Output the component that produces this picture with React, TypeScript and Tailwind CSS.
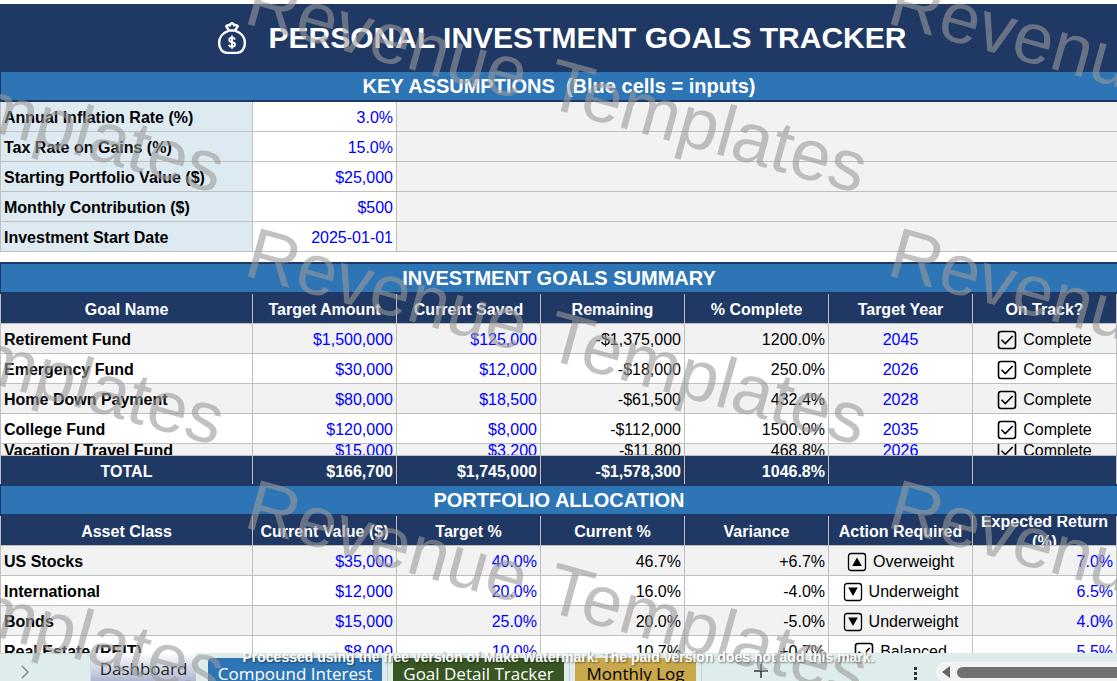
import type { ReactNode } from "react";

type Tone = "input" | "plain";

interface Goal {
  name: string;
  target: string;
  saved: string;
  remaining: string;
  complete: string;
  year: string;
}

interface Asset {
  name: string;
  value: string;
  target: string;
  current: string;
  variance: string;
  action: "Overweight" | "Underweight" | "Balanced";
  expected: string;
}

const assumptions = [
  { id: "inflation", label: "Annual Inflation Rate (%)", value: "3.0%" },
  { id: "tax", label: "Tax Rate on Gains (%)", value: "15.0%" },
  { id: "portfolio", label: "Starting Portfolio Value ($)", value: "$25,000" },
  { id: "contribution", label: "Monthly Contribution ($)", value: "$500" },
  { id: "start", label: "Investment Start Date", value: "2025-01-01" },
];

const goalHeaders = [
  "Goal Name",
  "Target Amount",
  "Current Saved",
  "Remaining",
  "% Complete",
  "Target Year",
  "On Track?",
];

const goals: Goal[] = [
  { name: "Retirement Fund", target: "$1,500,000", saved: "$125,000", remaining: "-$1,375,000", complete: "1200.0%", year: "2045" },
  { name: "Emergency Fund", target: "$30,000", saved: "$12,000", remaining: "-$18,000", complete: "250.0%", year: "2026" },
  { name: "Home Down Payment", target: "$80,000", saved: "$18,500", remaining: "-$61,500", complete: "432.4%", year: "2028" },
  { name: "College Fund", target: "$120,000", saved: "$8,000", remaining: "-$112,000", complete: "1500.0%", year: "2035" },
  { name: "Vacation / Travel Fund", target: "$15,000", saved: "$3,200", remaining: "-$11,800", complete: "468.8%", year: "2026" },
];

const totals = ["$166,700", "$1,745,000", "-$1,578,300", "1046.8%", "", ""];

const assetHeaders = [
  "Asset Class",
  "Current Value ($)",
  "Target %",
  "Current %",
  "Variance",
  "Action Required",
  "Expected Return (%)",
];

const assets: Asset[] = [
  { name: "US Stocks", value: "$35,000", target: "40.0%", current: "46.7%", variance: "+6.7%", action: "Overweight", expected: "7.0%" },
  { name: "International", value: "$12,000", target: "20.0%", current: "16.0%", variance: "-4.0%", action: "Underweight", expected: "6.5%" },
  { name: "Bonds", value: "$15,000", target: "25.0%", current: "20.0%", variance: "-5.0%", action: "Underweight", expected: "4.0%" },
  { name: "Real Estate (REIT)", value: "$8,000", target: "10.0%", current: "10.7%", variance: "+0.7%", action: "Balanced", expected: "5.5%" },
];

function MoneyBagIcon() {
  return (
    <svg width="30" height="34" viewBox="0 0 30 34" fill="none" stroke="white" strokeWidth="2.4" strokeLinejoin="round" aria-hidden="true">
      <path d="M12 9.500 9.200 5.200c1.300-1.300 2.500-1.400 3.700-.8.400-1.500 1.200-2.200 2.100-2.200s1.700.7 2.100 2.200c1.200-.6 2.400-.5 3.700.8L18 9.500" />
      <path d="M11.500 9.500h7" strokeLinecap="round" />
      <path d="M11.500 9.800C5.800 11.600 2.100 16.200 2.100 21.800c0 6 3.200 10.100 8.100 10.100h9.600c4.900 0 8.100-4.100 8.100-10.100 0-5.600-3.700-10.200-9.400-12" />
      <path d="M17.900 18.600c-.4-1.200-1.400-1.800-2.900-1.800-1.700 0-2.800.9-2.800 2.200 0 3.100 5.800 1.500 5.800 4.500 0 1.400-1.200 2.300-3 2.300-1.600 0-2.700-.7-3.100-1.900M15 14.600v13.200" strokeWidth="1.900" />
    </svg>
  );
}

function CheckIcon() {
  return (
    <svg width="20" height="20" viewBox="0 0 20 20" fill="none" stroke="black" aria-hidden="true">
      <rect x="1.500" y="1.500" width="17" height="17" rx="2.500" strokeWidth="1.600" />
      <path d="m4.500 9.700 3.800 3.800L15.700 6" strokeWidth="1.600" />
    </svg>
  );
}

function ArrowIcon({ up }: { up: boolean }) {
  return (
    <svg width="20" height="20" viewBox="0 0 20 20" fill="none" stroke="black" aria-hidden="true">
      <rect x="1.500" y="1.500" width="17" height="17" rx="2.500" strokeWidth="1.300" />
      <path d={up ? "M10 5.500 14.800 14H5.200z" : "M10 14 14.800 5.500H5.200z"} fill="black" stroke="none" />
    </svg>
  );
}

function Columns() {
  return (
    <colgroup>
      <col className="w-[252px]" />
      <col span={6} />
    </colgroup>
  );
}

function HeaderRow({ labels }: { labels: string[] }) {
  return (
    <tr className="bg-[#1f3864] text-white">
      {labels.map((label) => (
        <th key={label} scope="col" className="border-r border-b border-[#bfbfbf] p-0 font-bold">
          <div className="flex h-[29px] items-center justify-center overflow-hidden pt-0.5">{label}</div>
        </th>
      ))}
    </tr>
  );
}

function SectionTitle({ children }: { children: ReactNode }) {
  return (
    <h2 className="flex h-8 items-center justify-center border-y-2 border-l border-[#1f3864] bg-[#2e75b6] text-xl font-bold whitespace-pre text-white">
      {children}
    </h2>
  );
}

interface CellProps {
  children: ReactNode;
  tone?: Tone;
  center?: boolean;
  short?: boolean;
}

function Cell({ children, tone = "plain", center, short }: CellProps) {
  return (
    <td className={`border-r border-b border-[#bfbfbf] p-0 ${tone === "input" ? "text-[#0000ff]" : "text-black"}`}>
      <div
        className={`flex items-center gap-1.5 overflow-hidden px-[3px] pt-0.5 ${short ? "h-[11px]" : "h-[29px]"} ${
          center ? "justify-center" : "justify-end"
        }`}
      >
        {children}
      </div>
    </td>
  );
}

function NameCell({ children, short }: { children: ReactNode; short?: boolean }) {
  return (
    <th scope="row" className="border-r border-b border-[#bfbfbf] p-0 text-left font-bold text-black">
      <div className={`flex items-center overflow-hidden px-[3px] pt-0.5 ${short ? "h-[11px]" : "h-[29px]"}`}>{children}</div>
    </th>
  );
}

function Assumptions() {
  return (
    <table className="w-full table-fixed border-separate border-spacing-0 border-l border-[#bfbfbf]">
      <colgroup>
        <col className="w-[252px]" />
        <col className="w-[144px]" />
        <col />
      </colgroup>
      <tbody>
        {assumptions.map((item) => (
          <tr key={item.id}>
            <th scope="row" className="border-r border-b border-[#bfbfbf] bg-[#deeaf1] p-0 text-left font-bold">
              <label htmlFor={item.id} className="flex h-[29px] items-center px-[3px] pt-0.5">
                {item.label}
              </label>
            </th>
            <td className="border-r border-b border-[#bfbfbf] p-0">
              <input
                id={item.id}
                defaultValue={item.value}
                className="block h-[29px] w-full bg-white px-[3px] pt-0.5 text-right text-[#0000ff] outline-none"
              />
            </td>
            <td className="border-b border-[#bfbfbf] bg-[#f2f2f2] p-0" />
          </tr>
        ))}
      </tbody>
    </table>
  );
}

function GoalsTable() {
  return (
    <table className="w-full table-fixed border-separate border-spacing-0 border-l border-[#bfbfbf]">
      <Columns />
      <thead>
        <HeaderRow labels={goalHeaders} />
      </thead>
      <tbody>
        {goals.map((goal, index) => {
          const short = index === goals.length - 1;
          return (
            <tr key={goal.name} className={index % 2 === 0 ? "bg-[#f2f2f2]" : "bg-white"}>
              <NameCell short={short}>{goal.name}</NameCell>
              <Cell tone="input" short={short}>{goal.target}</Cell>
              <Cell tone="input" short={short}>{goal.saved}</Cell>
              <Cell short={short}>{goal.remaining}</Cell>
              <Cell short={short}>{goal.complete}</Cell>
              <Cell tone="input" short={short} center>{goal.year}</Cell>
              <Cell short={short} center>
                <CheckIcon />
                Complete
              </Cell>
            </tr>
          );
        })}
      </tbody>
      <tfoot>
        <tr className="bg-[#1f3864] text-white">
          <th scope="row" className="border-r border-[#bfbfbf] p-0 font-bold">
            <div className="flex h-7 items-center justify-center pt-1">TOTAL</div>
          </th>
          {totals.map((total, index) => (
            <td key={index} className="border-r border-[#bfbfbf] p-0 font-bold">
              <div className="flex h-7 items-center justify-end px-[3px] pt-1">{total}</div>
            </td>
          ))}
        </tr>
      </tfoot>
    </table>
  );
}

function AllocationTable() {
  return (
    <table className="w-full table-fixed border-separate border-spacing-0 border-l border-[#bfbfbf]">
      <Columns />
      <thead>
        <HeaderRow labels={assetHeaders} />
      </thead>
      <tbody>
        {assets.map((asset, index) => (
          <tr key={asset.name} className={index % 2 === 0 ? "bg-[#f2f2f2]" : "bg-white"}>
            <NameCell>{asset.name}</NameCell>
            <Cell tone="input">{asset.value}</Cell>
            <Cell tone="input">{asset.target}</Cell>
            <Cell>{asset.current}</Cell>
            <Cell>{asset.variance}</Cell>
            <Cell center>
              {asset.action === "Balanced" ? <CheckIcon /> : <ArrowIcon up={asset.action === "Overweight"} />}
              {asset.action}
            </Cell>
            <Cell tone="input">{asset.expected}</Cell>
          </tr>
        ))}
      </tbody>
    </table>
  );
}

function SheetTabs() {
  return (
    <footer className="flex h-7 shrink-0 items-start overflow-hidden bg-[#deecec] font-['Open_Sans','Noto_Sans',sans-serif] text-[17px] leading-6">
      <button aria-label="Next sheets" className="flex h-9 w-[91px] items-center rounded-tr-md border-t border-r border-[#cfdada] pl-5">
        <svg width="10" height="14" viewBox="0 0 10 14" fill="none" stroke="#888888" strokeWidth="1.500">
          <path d="m2 1 6 6-6 6" />
        </svg>
      </button>
      <button className="h-9 w-[105px] bg-linear-to-b from-white to-[#98a3c2] pb-1 font-medium text-[#222222]">Dashboard</button>
      <div className="flex h-9 border-r border-[#c5cfcf] pt-[5px] pr-[5px] pl-3">
        <button className="w-[174px] rounded-tl-sm bg-[#2e75b6] text-white">Compound Interest</button>
      </div>
      <div className="flex h-9 border-r border-[#c5cfcf] px-[5px] pt-[5px]">
        <button className="w-[171px] bg-[#375623] text-white">Goal Detail Tracker</button>
      </div>
      <div className="flex h-9 border-r border-[#c5cfcf] px-[5px] pt-[5px]">
        <button className="w-[121px] bg-[#c9a84c] text-black">Monthly Log</button>
      </div>
      <button aria-label="New sheet" className="ml-[51px] flex h-9 items-center">
        <svg width="16" height="16" viewBox="0 0 16 16" stroke="#333333" strokeWidth="1.500">
          <path d="M8 1v14M1 8h14" />
        </svg>
      </button>
      <div className="ml-auto flex items-start">
        <svg width="4" height="28" viewBox="0 0 4 28" fill="#333333" aria-hidden="true">
          <path d="M0 14h3v3H0zM0 19h3v3H0zM0 24h3v3H0z" />
        </svg>
        <div className="mt-[9px] ml-[18px] flex h-5 w-[181px] items-center rounded-l-full bg-[#f3f3f3] pl-1.5">
          <svg width="8" height="12" viewBox="0 0 8 12" fill="#666666" aria-hidden="true">
            <path d="M8 0v12L0 6z" />
          </svg>
          <div className="ml-[7px] h-[11px] flex-1 rounded-l-full bg-[#707070]" />
        </div>
      </div>
    </footer>
  );
}

const markColumns = [-396, 247, 890];
const markRows = [24, 276, 528];

function Watermark() {
  return (
    <div className="pointer-events-none absolute inset-0 overflow-hidden">
      <svg className="h-full w-full" fill="#999999" fillOpacity="0.6" fontFamily="Liberation Sans, Arial, sans-serif" fontSize="72">
        {markRows.map((y) =>
          markColumns.map((x) => (
            <text key={`${x}-${y}`} transform={`translate(${x} ${y}) rotate(15.5)`} x="-5">
              Revenue <tspan dx="5">Templates</tspan>
            </text>
          )),
        )}
      </svg>
      <p className="absolute inset-x-0 bottom-4 text-center text-sm leading-4 font-bold text-white [text-shadow:1px_1px_2px_#00000080]">
        Processed using the free version of Make Watermark. The paid version does not add this mark.
      </p>
    </div>
  );
}

export default function App() {
  return (
    <div className="relative flex h-screen flex-col overflow-hidden bg-white font-['Liberation_Sans',Arial,sans-serif] text-base leading-5">
      <main className="min-h-0 flex-1 overflow-hidden pt-1">
        <header className="flex h-[66px] items-center justify-center gap-[22px] bg-[#1f3864] pt-0.5 pl-1.5 text-white">
          <MoneyBagIcon />
          <h1 className="text-3xl leading-10 font-bold">PERSONAL INVESTMENT GOALS TRACKER</h1>
        </header>
        <SectionTitle>KEY ASSUMPTIONS{"  "}(Blue cells = inputs)</SectionTitle>
        <Assumptions />
        <div className="mt-[10px]">
          <SectionTitle>INVESTMENT GOALS SUMMARY</SectionTitle>
          <GoalsTable />
        </div>
        <SectionTitle>PORTFOLIO ALLOCATION</SectionTitle>
        <AllocationTable />
      </main>
      <SheetTabs />
      <Watermark />
    </div>
  );
}
